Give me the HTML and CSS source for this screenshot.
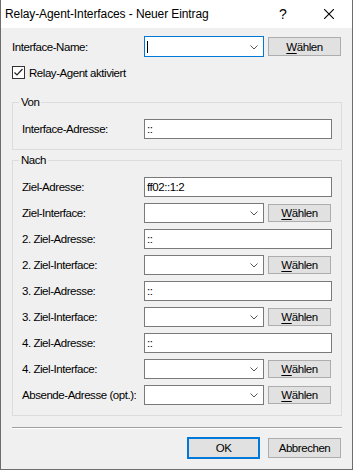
FILE: index.html
```html
<!DOCTYPE html>
<html lang="de">
<head>
  <meta charset="UTF-8" />
  <title>Relay-Agent-Interfaces - Neuer Eintrag</title>
  <link rel="stylesheet" href="styles.css">
</head>
<body>
  <div class="window">
    <div class="titlebar">
      <span class="title">Relay-Agent-Interfaces - Neuer Eintrag</span>
      <span class="caption-btn help">?</span>
      <span class="caption-btn close">
        <svg width="10" height="10" viewBox="0 0 10 10"><path d="M0 0L10 10M10 0L0 10" stroke="#000" stroke-width="1.1" fill="none"/></svg>
      </span>
    </div>

    <div class="client">
      <div class="top-row">
        <span class="lbl">Interface-Name:</span>
        <div class="combo focused">
          <span class="caret"></span>
          <svg class="chev" width="8" height="5" viewBox="0 0 8 5"><polyline points="0.5,0.5 4,4 7.5,0.5" stroke="#555" fill="none"/></svg>
        </div>
        <button class="btn"><u>W</u>ählen</button>
      </div>

      <div class="check-row">
        <span class="checkbox">
          <svg width="11" height="11" viewBox="0 0 11 11"><polyline points="1.5,5.5 4,8 9.5,2" stroke="#222" stroke-width="1.2" fill="none"/></svg>
        </span>
        <span>Relay-Agent aktiviert</span>
      </div>

      <fieldset class="group">
        <legend>Von</legend>
        <div class="grid">
          <span class="lbl">Interface-Adresse:</span>
          <div class="edit wide">::</div>
        </div>
      </fieldset>

      <fieldset class="group nach">
        <legend>Nach</legend>
        <div class="grid">
          <span class="lbl">Ziel-Adresse:</span>
          <div class="edit wide">ff02::1:2</div>

          <span class="lbl">Ziel-Interface:</span>
          <div class="combo"><svg class="chev" width="8" height="5" viewBox="0 0 8 5"><polyline points="0.5,0.5 4,4 7.5,0.5" stroke="#555" fill="none"/></svg></div>
          <button class="btn small"><u>W</u>ählen</button>

          <span class="lbl">2. Ziel-Adresse:</span>
          <div class="edit wide">::</div>

          <span class="lbl">2. Ziel-Interface:</span>
          <div class="combo"><svg class="chev" width="8" height="5" viewBox="0 0 8 5"><polyline points="0.5,0.5 4,4 7.5,0.5" stroke="#555" fill="none"/></svg></div>
          <button class="btn small"><u>W</u>ählen</button>

          <span class="lbl">3. Ziel-Adresse:</span>
          <div class="edit wide">::</div>

          <span class="lbl">3. Ziel-Interface:</span>
          <div class="combo"><svg class="chev" width="8" height="5" viewBox="0 0 8 5"><polyline points="0.5,0.5 4,4 7.5,0.5" stroke="#555" fill="none"/></svg></div>
          <button class="btn small"><u>W</u>ählen</button>

          <span class="lbl">4. Ziel-Adresse:</span>
          <div class="edit wide">::</div>

          <span class="lbl">4. Ziel-Interface:</span>
          <div class="combo"><svg class="chev" width="8" height="5" viewBox="0 0 8 5"><polyline points="0.5,0.5 4,4 7.5,0.5" stroke="#555" fill="none"/></svg></div>
          <button class="btn small"><u>W</u>ählen</button>

          <span class="lbl">Absende-Adresse (opt.):</span>
          <div class="combo"><svg class="chev" width="8" height="5" viewBox="0 0 8 5"><polyline points="0.5,0.5 4,4 7.5,0.5" stroke="#555" fill="none"/></svg></div>
          <button class="btn small"><u>W</u>ählen</button>
        </div>
      </fieldset>

      <div class="separator"></div>

      <div class="buttons">
        <button class="btn default">OK</button>
        <button class="btn">Abbrechen</button>
      </div>
    </div>
  </div>
</body>
</html>
```

FILE: styles.css
```css
* { box-sizing: border-box; }

body {
  margin: 0;
  background: #fff;
  font-family: 'Liberation Sans', Arial, sans-serif;
  font-size: 11.5px;
  letter-spacing: -0.45px;
  color: #000;
}

.window {
  width: 353px;
  height: 470px;
  background: #f0f0f0;
  border: 1px solid #6d6d6d;
  border-top: none;
  display: flex;
  flex-direction: column;
}

/* Titelleiste */
.titlebar {
  height: 28px;
  background: #fff;
  display: flex;
  align-items: center;
  padding-left: 4px;
}

.title {
  flex: 1;
  font-size: 12px;
  letter-spacing: -0.1px;
}

.caption-btn {
  width: 46px;
  height: 28px;
  display: flex;
  align-items: center;
  justify-content: center;
}

.help {
  font-size: 14px;
  letter-spacing: 0;
}

.client {
  padding: 0 10px 0 11px;
}

.top-row {
  margin-top: 8px;
  display: grid;
  grid-template-columns: 128px 120px 73px;
  column-gap: 4px;
  align-items: center;
}

.check-row {
  margin-top: 9px;
  height: 13px;
  display: flex;
  align-items: center;
  gap: 4px;
}

.checkbox {
  width: 13px;
  height: 13px;
  border: 1px solid #333;
  background: #fff;
  display: flex;
}

/* Eingabefelder */
.edit,
.combo {
  height: 20px;
  background: #fff;
  border: 1px solid #7a7a7a;
  padding-left: 2px;
  display: flex;
  align-items: center;
  white-space: nowrap;
}

.edit.wide {
  grid-column: 2 / 4;
}

.combo {
  position: relative;
}

.top-row .combo {
  height: 21px;
}

.combo.focused {
  border-color: #0078d7;
}

.caret {
  width: 1px;
  height: 12px;
  background: #000;
}

.chev {
  position: absolute;
  right: 5px;
  top: 50%;
  margin-top: -2px;
}

.btn {
  height: 19px;
  padding: 0;
  background: #e1e1e1;
  border: 1px solid #adadad;
  font-family: inherit;
  font-size: 11.5px;
  letter-spacing: -0.45px;
  color: #000;
}

.btn u {
  text-underline-offset: 2px;
}

.btn.small {
  width: 63px;
  height: 18px;
}

/* Gruppen */
.group {
  margin: 16px 0 0;
  padding: 10px 9px 10px 6px;
  border: 1px solid #dcdcdc;
  min-width: 0;
}

.group.nach {
  margin-top: 3px;
}

.group legend {
  padding: 0 2px;
  line-height: 14px;
}

.grid {
  margin-left: 3px;
  display: grid;
  grid-template-columns: 118px 120px 64px;
  grid-auto-rows: 20px;
  column-gap: 4px;
  row-gap: 6px;
  align-items: center;
}

.separator {
  margin-top: 11px;
  border-top: 1px solid #a0a0a0;
  border-bottom: 1px solid #fff;
}

.buttons {
  margin-top: 8px;
  padding-right: 1px;
  display: flex;
  justify-content: flex-end;
  align-items: center;
  gap: 8px;
}

.buttons .btn {
  width: 73px;
  height: 20px;
}

.buttons .btn.default {
  height: 22px;
  border: 2px solid #0078d7;
}
```
